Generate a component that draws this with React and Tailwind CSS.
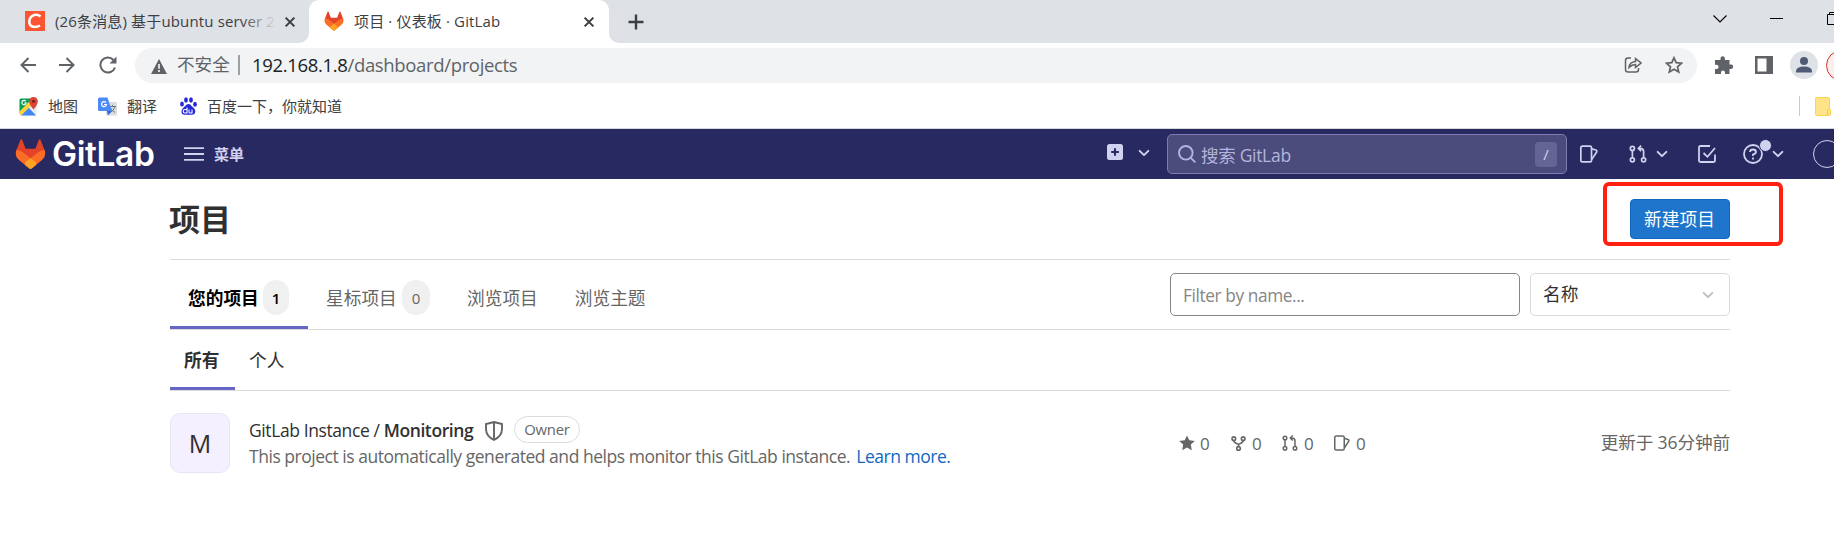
const B = "whitespace-nowrap leading-none";

function Tanuki({ className }) {
  return (
    <svg viewBox="0 0 31 30" className={className}>
      <path d="M5.600 0.600 Q6.400 -0.300 7.100 0.800 L10.600 9.800 H20.400 L23.900 0.800 Q24.600 -0.300 25.400 0.600 L29.500 11 V17 L15.500 22 L1.500 17 V11z" fill="#e24329" />
      <path d="M1.500 10.800 Q6.500 11.500 10.500 15.300 L15.500 19.200 L20.500 15.300 Q24.500 11.500 29.500 10.800 Q31.800 17 27 21 L17 29.200 Q15.500 30.500 14 29.200 L4 21 Q-0.800 17 1.500 10.800z" fill="#fc6d26" />
      <path d="M10.300 23 L15.500 19.200 L20.700 23 L21.200 25.700 L17 29.200 Q15.500 30.500 14 29.200 L9.800 25.700z" fill="#fca326" />
    </svg>
  );
}

function Svg({ s = 16, className, children, sw = 1.5 }) {
  return (
    <svg viewBox={`0 0 ${s} ${s}`} className={className} fill="none" stroke="currentColor" strokeWidth={sw}>
      {children}
    </svg>
  );
}

const Issues = ({ className }) => (
  <Svg className={className}>
    <rect x="0.750" y="1" width="9.500" height="14" rx="1.500" />
    <path d="M10.300 3.300 L14 4.500 Q15.400 5 14.800 6.200 L10.300 13" />
  </Svg>
);
const Merge = ({ className }) => (
  <Svg className={className}>
    <circle cx="3" cy="3" r="1.800" />
    <circle cx="3" cy="13.200" r="1.800" />
    <circle cx="13" cy="13.200" r="1.800" />
    <path d="M3 4.700V11.300M13 11.300V6Q13 3 10 3H8.500M10.800 0.500L8.300 3L10.800 5.500" />
  </Svg>
);
const Fork = ({ className }) => (
  <Svg className={className} sw={1.700}>
    <circle cx="3" cy="2.800" r="1.900" />
    <circle cx="13" cy="2.800" r="1.900" />
    <circle cx="8" cy="13.200" r="1.900" />
    <path d="M3 4.700Q3 6.500 5 7.500L8 9L11 7.500Q13 6.500 13 4.700M8 9V11.500" />
  </Svg>
);
const Chevron = ({ className }) => (
  <Svg className={className} sw={2.200}>
    <path d="M3 5.500L8 10.500L13 5.500" strokeLinecap="round" strokeLinejoin="round" />
  </Svg>
);
const Close = ({ className }) => (
  <Svg className={className} sw={2.400}>
    <path d="M3 3L13 13M13 3L3 13" />
  </Svg>
);

function TabStrip() {
  return (
    <div className="flex h-[43px] bg-white text-[#3c4043] text-[15px]">
      <div className="flex w-[309px] items-center rounded-br-[10px] bg-[#dee1e6] pl-[25px]">
        <svg viewBox="0 0 20 20" className="mt-[-1px] h-5 w-5 shrink-0">
          <rect width="20" height="20" fill="#fc5531" />
          <path d="M15.500 5.500Q13 3.300 10 3.800Q5 4.800 4.300 10Q4 15.800 9.500 16Q12.500 16 15 14.500" fill="none" stroke="#fff" strokeWidth="2.500" />
        </svg>
        <div className="relative ml-[10px] w-[222px] overflow-hidden py-1">
          <span className={`${B} tracking-[0.150px]`}>(26条消息) 基于ubuntu server 2</span>
          <div className="absolute inset-y-0 right-0 w-9 bg-gradient-to-r from-transparent to-[#dee1e6]" />
        </div>
        <Close className="ml-[6px] h-[14px] w-[14px] shrink-0" />
      </div>
      <div className="flex w-[300px] bg-[#dee1e6]">
        <div className="flex w-full items-center rounded-t-[10px] bg-white pl-[15px]">
          <Tanuki className="mt-[-1px] h-5 w-5 shrink-0" />
          <span className={`${B} ml-[10px] w-[224px] tracking-[0.150px]`}>项目 · 仪表板 · GitLab</span>
          <Close className="ml-[4px] h-[14px] w-[14px] shrink-0" />
        </div>
      </div>
      <div className="flex flex-1 items-center rounded-bl-[10px] bg-[#dee1e6] pl-[19px]">
        <Svg className="h-4 w-4" sw={2.400}>
          <path d="M8 0.500V15.500M0.500 8H15.500" />
        </Svg>
      </div>
      <div className="flex w-[121px] items-start bg-[#dee1e6] text-black">
        <Svg className="mt-3 h-[14px] w-[14px] shrink-0" s={14} sw={1.100}>
          <path d="M0.500 3.500L7 10L13.500 3.500" />
        </Svg>
        <div className="ml-[43px] mt-[18px] h-px w-[13px] shrink-0 bg-black" />
        <svg viewBox="0 0 7 13" className="ml-[44px] mt-3 h-[13px] w-[7px] shrink-0" fill="none" stroke="#000">
          <path d="M7 2.500H0.500V12.500H7M2.500 2.500V0.500H7" />
        </svg>
      </div>
    </div>
  );
}

function Toolbar() {
  return (
    <div className="flex h-11 items-center overflow-hidden pl-5 text-[#5f6368]">
      <Svg className="h-4 w-4 shrink-0" sw={2}>
        <path d="M16 8H1.500M8.500 1L1.500 8L8.500 15" />
      </Svg>
      <Svg className="ml-[23px] h-4 w-4 shrink-0" sw={2}>
        <path d="M0 8H14.500M7.500 1L14.500 8L7.500 15" />
      </Svg>
      <Svg className="ml-6 h-[18px] w-[18px] shrink-0" s={18} sw={2}>
        <path d="M16 11.500A7.500 7.500 0 1 1 14.300 3.700L16 5.500" />
        <path d="M17.500 0.500V7.500H10.500z" fill="currentColor" stroke="none" />
      </Svg>
      <div className="ml-[18px] flex h-[35px] w-[1562px] shrink-0 items-center rounded-full bg-[#f1f3f4] pl-4">
        <svg viewBox="0 0 16 15" className="mt-[2px] h-[15px] w-4 shrink-0">
          <path d="M8 0L16 15H0z" fill="currentColor" />
          <path d="M8 5V9.800M8 11V13" stroke="#f1f3f4" strokeWidth="1.700" />
        </svg>
        <span className={`${B} ml-[10px] w-[60px] text-[17.6px]`}>不安全</span>
        <div className="ml-px h-5 w-[2px] bg-[#9aa0a6]" />
        <span className={`${B} ml-[12px] w-[1373px] text-[18.500px] tracking-[-0.34px]`}>
          <span className="text-[#202124]">192.168.1.8</span>/dashboard/projects
        </span>
        <Svg className="-ml-px h-[18px] w-[18px] shrink-0" s={18} sw={1.500}>
          <path d="M7 2H4Q1.500 2 1.500 4.500V13.500Q1.500 16 4 16H12Q14.500 16 14.500 13.500V12M5 11.500Q5.500 6 11.500 5.500V2.500L17 7L11.500 11.500V8.500Q8 8.500 5 11.500z" />
        </Svg>
        <Svg className="ml-[23px] h-[18px] w-[18px] shrink-0" s={18} sw={1.700}>
          <path d="M9 1.800L11.200 6.700L16.500 7.200L12.500 10.800L13.700 16L9 13.200L4.300 16L5.500 10.800L1.500 7.200L6.800 6.700z" />
        </Svg>
      </div>
      <svg viewBox="0 0 18 18" className="ml-[18px] h-[18px] w-[18px] shrink-0" fill="currentColor">
        <path d="M0 4H5.500V2.500A2.200 2.200 0 0 1 9.900 2.500V4H14.500V8.500H16A2.200 2.200 0 0 1 16 12.900H14.500V18H10V16.500A2 2 0 0 0 6 16.500V18H0V13H1.500A2 2 0 0 0 1.500 8.800H0z" />
      </svg>
      <svg viewBox="0 0 18 18" className="ml-[22px] h-[18px] w-[18px] shrink-0">
        <path d="M0 0H18V18H0zM2.500 2.500V15.500H11.500V2.500z" fill="currentColor" fillRule="evenodd" />
      </svg>
      <svg viewBox="0 0 28 28" className="ml-[17px] h-7 w-7 shrink-0">
        <circle cx="14" cy="14" r="14" fill="#dee1e6" />
        <circle cx="14" cy="10" r="4" fill="#4f5b73" />
        <path d="M6 21.500V20Q6.500 15.500 14 15.500T22 20V21.500z" fill="#4f5b73" />
      </svg>
      <div className="ml-2 h-[31px] w-[60px] shrink-0 rounded-full border border-[#d93025] bg-[#fceeed]" />
    </div>
  );
}

function Bookmarks() {
  return (
    <div className="flex h-[42px] items-center border-b border-[#d5d7da] pb-[3px] pl-[19px] text-[15px] text-[#3c4043]">
      <svg viewBox="0 0 19 19" className="h-[19px] w-[19px] shrink-0">
        <rect x="0.500" y="1.500" width="17" height="17" rx="1.500" fill="#e8eaed" />
        <path d="M0.500 3Q0.500 1.500 2 1.500H13L0.500 16z" fill="#109d58" />
        <path d="M2 18.500L9.500 10.500L17 18.500z" fill="#4285f4" />
        <path d="M0.500 14.500L12 3L15 6L2 18.500L0.500 17z" fill="#fdd23c" />
        <path d="M14.500 0A4.400 4.400 0 0 1 18.900 4.500Q18.500 8 14.500 12.500Q10.500 8 10.100 4.500A4.400 4.400 0 0 1 14.500 0z" fill="#db4437" />
        <circle cx="14.500" cy="4.300" r="1.500" fill="#7b1d15" />
        <path d="M6.800 4.200A2.200 2.200 0 1 0 7.200 6H5.200" fill="none" stroke="#fff" strokeWidth="1.100" />
      </svg>
      <span className={`${B} ml-[10px] w-[50px]`}>地图</span>
      <svg viewBox="0 0 19 19" className="h-[19px] w-[19px] shrink-0">
        <rect x="8" y="5" width="11" height="13.500" rx="1.500" fill="#dcdcdc" />
        <path d="M11 9.500H18M14.500 8V9.500M17 9.500Q16 13.500 12 15.500M12.500 11Q14 14 17 15.500" stroke="#607d8b" fill="none" />
        <path d="M9 14H14L10 18.500z" fill="#3367d6" />
        <path d="M1.500 0.500H9.500L14 14H1.500Q0 14 0 12.500V2Q0 0.500 1.500 0.500z" fill="#4c8bf5" />
        <path d="M8 5.500A2.500 2.500 0 1 0 8.500 7.500H6" fill="none" stroke="#fff" strokeWidth="1.200" />
      </svg>
      <span className={`${B} ml-[10px] w-[53px]`}>翻译</span>
      <svg viewBox="0 0 17 18" className="h-[18px] w-[17px] shrink-0" fill="#2529d8">
        <ellipse cx="6" cy="3" rx="1.900" ry="2.700" />
        <ellipse cx="11" cy="3" rx="1.900" ry="2.700" />
        <ellipse cx="2" cy="7" rx="1.900" ry="2.500" />
        <ellipse cx="15" cy="7.200" rx="1.900" ry="2.500" />
        <path d="M8.500 7Q10.500 7 11.500 9Q15.500 11.800 15.300 14.500Q15 18 11.500 17.800H5Q1.500 18 1.500 14.500Q1.500 12 5.200 9Q6.500 7 8.500 7z" />
        <path d="M7 10.500V16H5A1.700 1.700 0 0 1 5 12.500H7M9 12.500V15Q9 16 10 16H12V12.500" fill="none" stroke="#fff" strokeWidth="1.100" />
      </svg>
      <span className={`${B} ml-[10px]`}>百度一下，你就知道</span>
      <div className="ml-auto mr-[15px] h-5 w-px bg-[#c8cacd]" />
      <svg viewBox="0 0 19 19" className="h-[19px] w-[19px] shrink-0">
        <path d="M1.500 0.500H13Q14.500 0.500 14.500 2V12.500H15.500V17Q15.500 18.500 14 18.500H1.500Q0.500 18.500 0.500 17.500V1.500Q0.500 0.500 1.500 0.500z" fill="#ffe389" stroke="#fbd34e" />
        <path d="M12.500 18V13.500Q12.500 12.500 14 12.500" fill="none" stroke="#f5c93d" />
      </svg>
    </div>
  );
}

function GitLabBar() {
  return (
    <div className="flex h-[50px] items-center overflow-hidden bg-[#292961] pl-[15px] text-[#d1d1f0]">
      <Tanuki className="h-[30px] w-[31px] shrink-0" />
      <span className={`${B} ml-[6px] mt-[2px] w-[105px] font-[Inter] text-[33.500px] font-semibold tracking-[-0.4px] text-white`}>GitLab</span>
      <Svg className="ml-[27px] h-[14px] w-5 shrink-0" s={20} sw={0}>
        <path d="M-4.300 1.500H24.300M-4.300 10H24.300M-4.300 18.500H24.300" strokeWidth="2.600" />
      </Svg>
      <span className={`${B} ml-[10px] text-[15px] font-bold`}>菜单</span>
      <svg viewBox="0 0 16 16" className="ml-auto mb-1 h-4 w-4 shrink-0">
        <rect width="16" height="16" rx="2.500" fill="currentColor" />
        <path d="M8 4.200V11.800M4.200 8H11.800" stroke="#292961" strokeWidth="2" />
      </svg>
      <Chevron className="mb-[3px] ml-[14px] mr-[16px] h-[14px] w-[14px] shrink-0" />
      <div className="flex h-10 w-[400px] shrink-0 items-center rounded-[5px] border border-[#7d7db3] bg-[#4b4b7c] pl-[10px] pr-[9px] text-[#b4b4dc]">
        <Svg className="h-[18px] w-[18px] shrink-0" s={18} sw={1.900}>
          <circle cx="7.800" cy="7.800" r="6.800" />
          <path d="M12.800 12.800L17.300 17.300" />
        </Svg>
        <span className={`${B} ml-[5px] mt-[4px] text-[17.500px] tracking-[-0.3px]`}>搜索 GitLab</span>
        <div className="ml-auto flex h-[25px] w-[22px] items-center justify-center rounded bg-[#656595] text-[15px] text-[#d1d1f0]">/</div>
      </div>
      <Issues className="ml-[13px] h-[18px] w-[18px] shrink-0" />
      <Merge className="ml-[31px] h-[18px] w-[18px] shrink-0" />
      <Chevron className="ml-[8px] h-[14px] w-[14px] shrink-0" />
      <Svg className="ml-[29px] h-[18px] w-[18px] shrink-0" s={18} sw={1.800}>
        <path d="M12 1H2.500Q1 1 1 2.500V15.500Q1 17 2.500 17H15.500Q17 17 17 15.500V9.500M5.500 8L9.500 11.800L17 3" />
      </Svg>
      <div className="relative ml-[27px] h-5 w-5 shrink-0">
        <Svg className="h-5 w-5" s={20} sw={1.800}>
          <circle cx="10" cy="10" r="9" />
          <path d="M7 8Q7 5.500 10 5.500T13 8Q13 9.500 10 10.500V12M10 13.500V15.500" />
        </Svg>
        <div className="absolute -top-[5px] left-[16px] h-[13px] w-[13px] rounded-full border border-[#292961] bg-[#d1d1f0]" />
      </div>
      <Chevron className="ml-[8px] h-[14px] w-[14px] shrink-0" />
      <div className="ml-[28px] mr-[-7px] h-7 w-7 shrink-0 rounded-full border border-[#d1d1f0]" />
    </div>
  );
}

function Header() {
  return (
    <div className="flex h-[81px] items-start justify-between border-b border-[#dbdbdb]">
      <h1 className={`${B} mt-[25px] -ml-px text-[31px] font-bold text-[#303030]`}>项目</h1>
      <div className="mr-[-53px] mt-[3px] flex h-[64px] w-[180px] items-start rounded-[6px] border-4 border-[#ff2012] pl-[23px] pt-[13px]">
        <button className="flex h-10 w-[100px] items-center justify-center rounded-[4px] border border-[#1068bf] bg-[#1f75cb] pt-px pr-px text-[17.700px] leading-none text-white">新建项目</button>
      </div>
    </div>
  );
}

function Tabs() {
  return (
    <div className="flex h-[70px] border-b border-[#dbdbdb] text-[17.700px] text-[#666]">
      <div className="flex w-[138px] items-start border-b-[3px] border-[#6666c4] pl-[18px] pt-5 font-bold text-black">
        <span className={`${B} mt-[10px] w-[70px]`}>您的项目</span>
        <span className="ml-[5px] flex h-[35px] w-[26px] items-center justify-center rounded-full bg-[#f0f0f0] pt-px text-[15px] font-semibold leading-none">1</span>
      </div>
      <div className="flex items-start pl-[18px] pt-5">
        <span className={`${B} mt-[10px] w-[70px]`}>星标项目</span>
        <span className="ml-[6px] flex h-[35px] w-[28px] items-center justify-center rounded-full bg-[#f0f0f0] pt-px text-[15px] leading-none">0</span>
        <span className={`${B} ml-[37px] mt-[10px]`}>浏览项目</span>
        <span className={`${B} ml-[37px] mt-[10px]`}>浏览主题</span>
      </div>
      <div className="ml-auto mt-[13px] flex h-[43px] w-[350px] items-center rounded-[5px] border border-[#868686] pl-[12px] text-[17.300px] tracking-[-0.4px] text-[#868686]">
        <span className={`${B} mt-[3px]`}>Filter by name...</span>
      </div>
      <div className="ml-[10px] mt-[13px] flex h-[43px] w-[200px] items-center justify-between rounded-[5px] border border-[#dbdbdb] pl-[12px] pr-[14px] text-[#303030]">
        <span className={B}>名称</span>
        <Chevron className="h-[14px] w-[14px] text-[#bfbfbf]" />
      </div>
    </div>
  );
}

function SubTabs() {
  return (
    <div className="flex h-[61px] border-b border-[#dbdbdb] text-[17.700px] text-[#303030]">
      <div className="w-[65px] border-b-[3px] border-[#6666c4] pl-[14px] pt-[22px] leading-none font-bold">所有</div>
      <div className={`${B} pl-[14px] pt-[22px]`}>个人</div>
    </div>
  );
}

function Project() {
  return (
    <div className="flex pt-[22px] text-[17.500px] text-[#666]">
      <div className="flex h-[60px] w-[60px] items-center justify-center rounded-[10px] border border-[#e8e4f2] bg-[#f4f0ff] pt-[2px] text-[25px] text-[#303030]">M</div>
      <div className="ml-[19px] w-[930px]">
        <div className="mt-[3px] flex h-[27px] items-center text-[#303030]">
          <span className={`${B} mt-[2px] w-[236px] tracking-[-0.400px]`}>
            GitLab Instance / <span className="font-semibold">Monitoring</span>
          </span>
          <svg viewBox="0 0 18 20" className="mt-[2px] h-5 w-[18px]" fill="none" stroke="#666" strokeWidth="1.900">
            <path d="M9 1L17 3V8Q17 15 9 19Q1 15 1 8V3zM9 1V19" />
          </svg>
          <span className="ml-[11px] flex h-[27px] w-[66px] items-center justify-center rounded-full border border-[#dbdbdb] text-[14.800px] leading-none tracking-[-0.2px] text-[#666]">Owner</span>
        </div>
        <p className={`${B} mt-[5px] tracking-[-0.470px]`}>
          This project is automatically generated and helps monitor this GitLab instance.{" "}
          <span className="ml-[2px] text-[#1068bf]">Learn more.</span>
        </p>
      </div>
      <div className="flex h-[60px] items-center text-[17px] leading-none">
        <svg viewBox="0 0 16 16" className="h-4 w-4" fill="currentColor">
          <path d="M8 0.500L10.300 5.200L15.800 5.900L11.800 9.600L12.800 15.200L8 12.500L3.200 15.200L4.200 9.600L0.200 5.900L5.700 5.200z" />
        </svg>
        <span className="ml-[5px] w-[31px]">0</span>
        <Fork className="h-[15px] w-[15px]" />
        <span className="ml-[6px] w-[30px]">0</span>
        <Merge className="h-4 w-4" />
        <span className="ml-[6px] w-[30px]">0</span>
        <Issues className="h-4 w-4" />
        <span className="ml-[6px]">0</span>
      </div>
      <div className={`${B} ml-auto flex h-[60px] items-center text-[17.600px] tracking-[-0.1px]`}>更新于 36分钟前</div>
    </div>
  );
}

export default function App() {
  return (
    <div className="h-[541px] overflow-hidden bg-white font-['Open_Sans','Noto_Sans_CJK_SC',sans-serif]">
      <TabStrip />
      <Toolbar />
      <Bookmarks />
      <GitLabBar />
      <main className="mr-[104px] ml-[170px]">
        <Header />
        <Tabs />
        <SubTabs />
        <Project />
      </main>
    </div>
  );
}
